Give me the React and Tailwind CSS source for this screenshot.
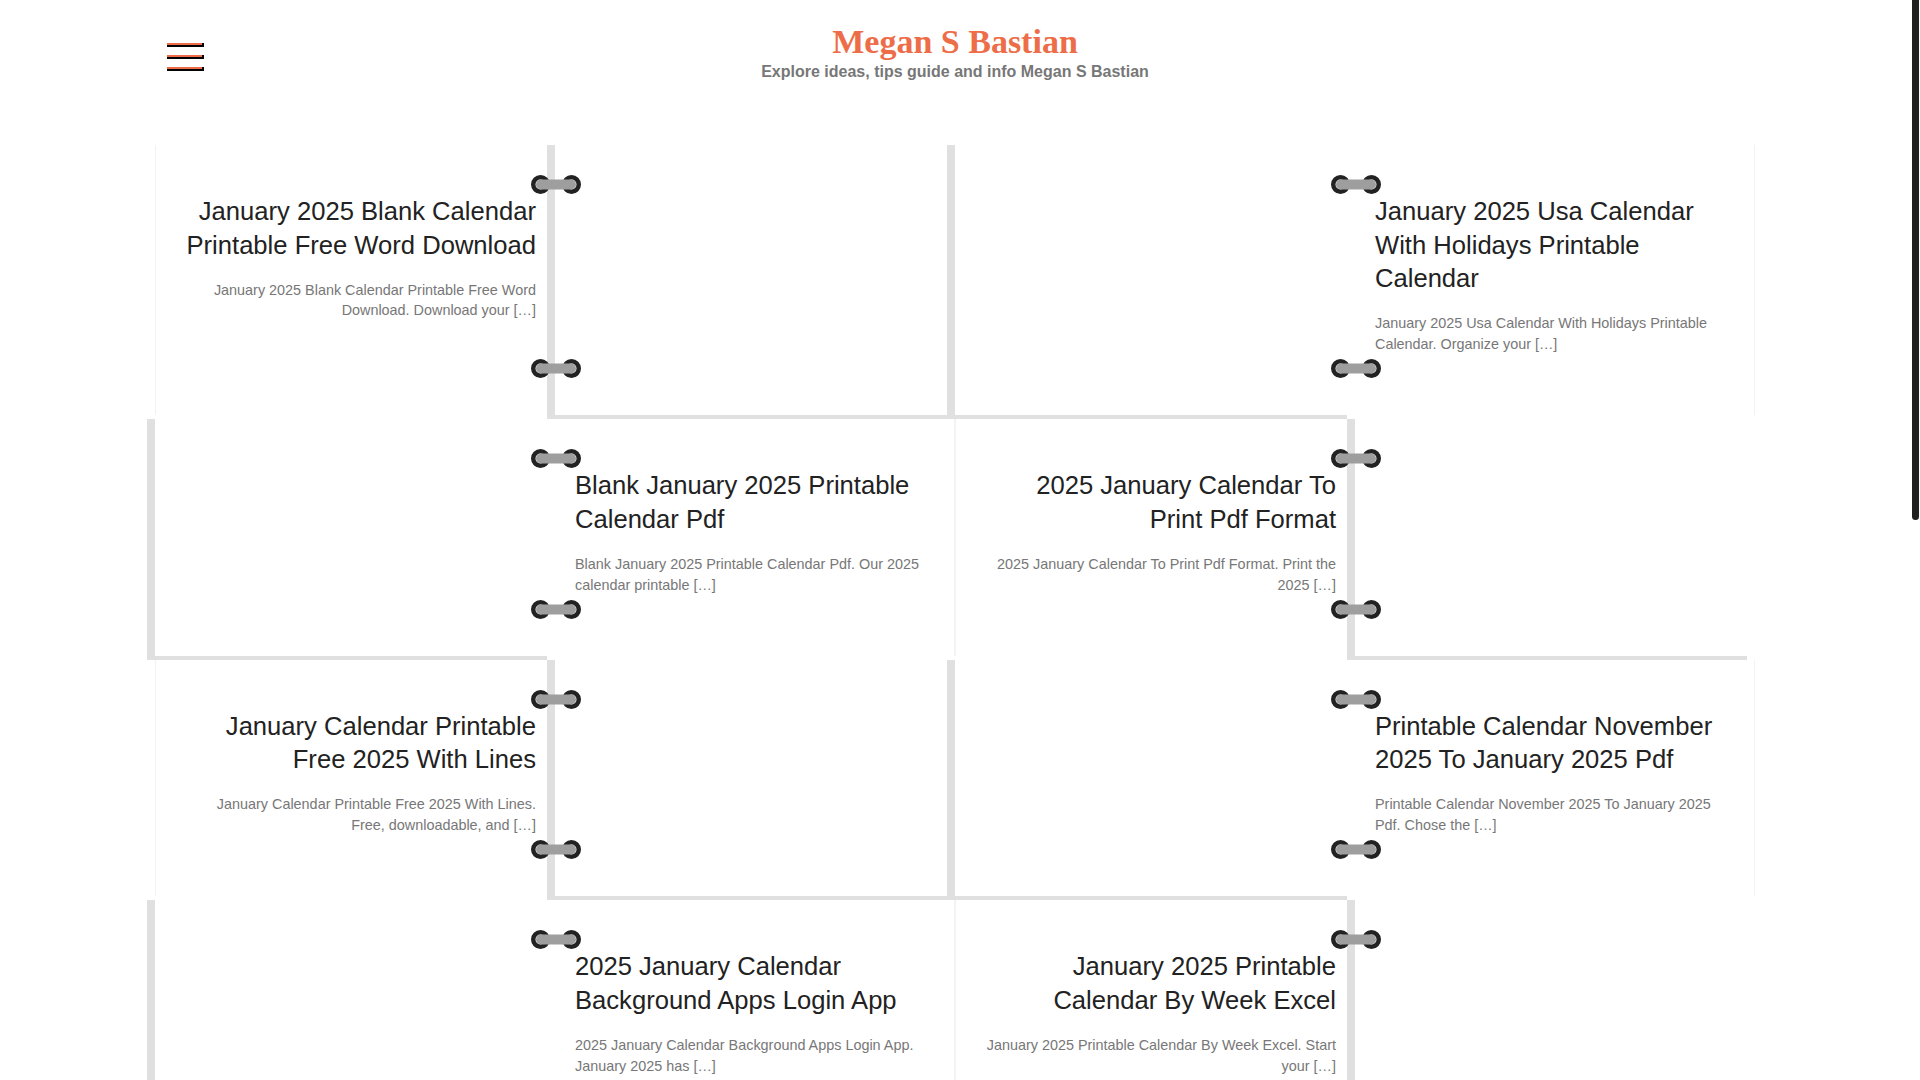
import React from "react";

const rows = [
  [
    {
      textLeft: true,
      title: "January 2025 Blank Calendar Printable Free Word Download",
      excerpt: "January 2025 Blank Calendar Printable Free Word Download. Download your […]",
    },
    {
      textLeft: false,
      title: "January 2025 Usa Calendar With Holidays Printable Calendar",
      excerpt: "January 2025 Usa Calendar With Holidays Printable Calendar. Organize your […]",
    },
  ],
  [
    {
      textLeft: false,
      title: "Blank January 2025 Printable Calendar Pdf",
      excerpt: "Blank January 2025 Printable Calendar Pdf. Our 2025 calendar printable […]",
    },
    {
      textLeft: true,
      title: "2025 January Calendar To Print Pdf Format",
      excerpt: "2025 January Calendar To Print Pdf Format. Print the 2025 […]",
    },
  ],
  [
    {
      textLeft: true,
      title: "January Calendar Printable Free 2025 With Lines",
      excerpt: "January Calendar Printable Free 2025 With Lines. Free, downloadable, and […]",
    },
    {
      textLeft: false,
      title: "Printable Calendar November 2025 To January 2025 Pdf",
      excerpt: "Printable Calendar November 2025 To January 2025 Pdf. Chose the […]",
    },
  ],
  [
    {
      textLeft: false,
      title: "2025 January Calendar Background Apps Login App",
      excerpt: "2025 January Calendar Background Apps Login App. January 2025 has […]",
    },
    {
      textLeft: true,
      title: "January 2025 Printable Calendar By Week Excel",
      excerpt: "January 2025 Printable Calendar By Week Excel. Start your […]",
    },
  ],
];

function Ring({ className }) {
  return (
    <svg className={className} width="50" height="19" viewBox="0 0 50 19">
      <circle cx="9.5" cy="9.5" r="7.25" fill="none" stroke="#222222" strokeWidth="4.5" />
      <circle cx="40.5" cy="9.5" r="7.25" fill="none" stroke="#222222" strokeWidth="4.5" />
      <rect x="5" y="4.5" width="40" height="10" rx="5" fill="#9e9e9e" />
    </svg>
  );
}

function PostText({ post, align }) {
  return (
    <div className={align === "right" ? "text-right" : "text-left"}>
      <h2 className="text-[25.6px] leading-[33.6px] font-normal text-[#222222]">{post.title}</h2>
      <p className="mt-[17.5px] text-[14.4px] leading-[20.7px] text-[#777777]">{post.excerpt}</p>
    </div>
  );
}

function Card({ post, last }) {
  return (
    <div className="relative flex w-[800px] shrink-0">
      {post.textLeft ? (
        <>
          <div className="w-[392px] shrink-0 mb-[4px] border-l border-[#f3f3f3] pl-[28px] pr-[11px] pt-[50px] pb-[60.5px]">
            <PostText post={post} align="right" />
          </div>
          <div
            className={
              last
                ? "w-[400px] shrink-0 bg-white border-l-[8px] border-b-[4px] border-[#e0e0e0]"
                : "flex-1 bg-white border-l-[8px] border-b-[4px] border-[#e0e0e0]"
            }
          />
        </>
      ) : (
        <>
          <div className="-ml-[8px] w-[400px] shrink-0 bg-white border-l-[8px] border-b-[4px] border-[#e0e0e0]" />
          <div className="flex-1 mb-[4px] border-r border-[#f3f3f3] pl-[28px] pr-[27px] pt-[50px] pb-[60.5px]">
            <PostText post={post} align="left" />
          </div>
        </>
      )}
      <Ring className="absolute left-[376px] top-[30px]" />
      <Ring className="absolute left-[376px] bottom-[41px]" />
    </div>
  );
}

function Hamburger() {
  return (
    <div className="flex flex-col gap-[8px]">
      {[0, 1, 2].map((i) => (
        <div key={i} className="w-[37px] h-[4px] bg-black">
          <div className="w-[35px] h-[2px] bg-[#ed6d49]" />
        </div>
      ))}
    </div>
  );
}

export default function App() {
  return (
    <div className="flex h-screen w-full overflow-hidden bg-white font-['Liberation_Sans',Arial,sans-serif]">
      <main className="flex-1 overflow-hidden">
        <header className="mx-auto flex w-[1600px] pt-[23px]">
          <div className="w-[200px] pl-[12px] pt-[20px]">
            <Hamburger />
          </div>
          <div className="flex-1 text-center">
            <h1 className="font-['Liberation_Serif','Times_New_Roman',serif] text-[34px] leading-[37px] font-bold text-[#ed6d49]">
              Megan S Bastian
            </h1>
            <p className="text-[16px] leading-[24px] font-bold text-[#777777]">
              Explore ideas, tips guide and info Megan S Bastian
            </p>
          </div>
          <div className="w-[200px]" />
        </header>

        <section className="mx-auto mt-[61px] w-[1600px]">
          {rows.map((row, i) => (
            <div key={i} className="flex">
              {row.map((post, j) => (
                <Card key={j} post={post} last={j === 1} />
              ))}
            </div>
          ))}
        </section>
      </main>
      <div className="flex w-[10px] shrink-0 justify-center bg-white">
        <div className="h-[520px] w-[7px] rounded-b-full bg-[#1f1f1f]" />
      </div>
    </div>
  );
}
